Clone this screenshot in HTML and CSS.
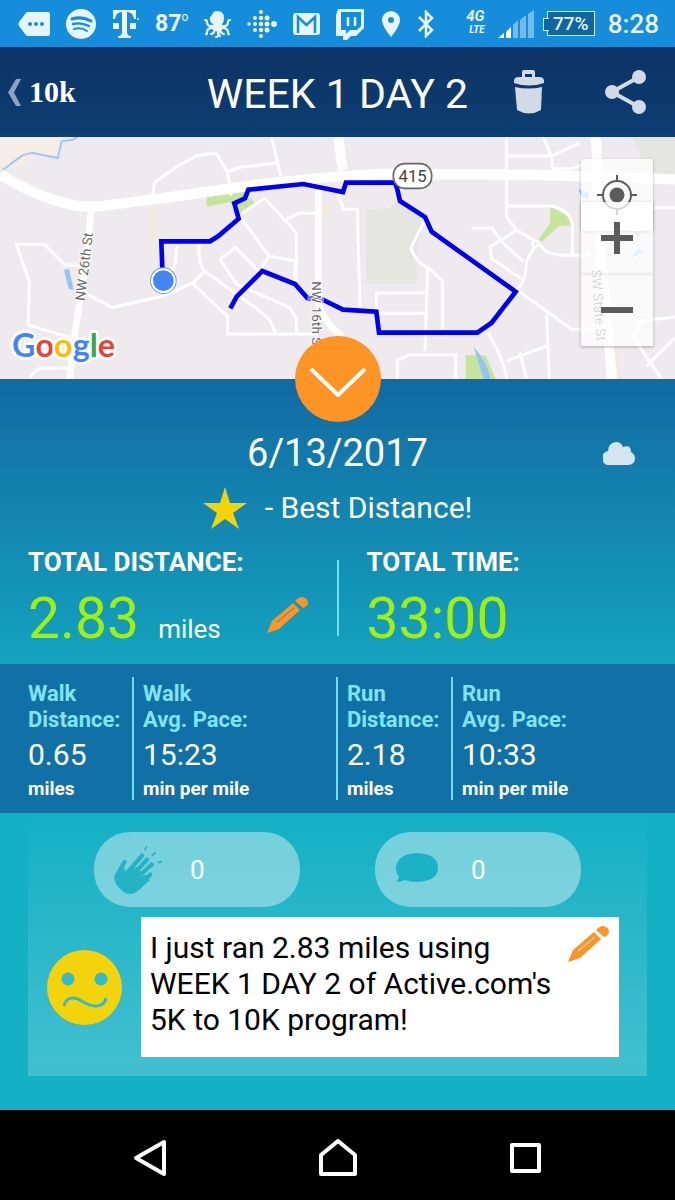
FILE: index.html
```html
<!DOCTYPE html>
<html lang="en">
<head>
<meta charset="UTF-8">
<meta name="viewport" content="width=device-width, initial-scale=1.0">
<title>WEEK 1 DAY 2</title>
<link rel="stylesheet" href="styles.css">
</head>
<body>
    <!-- phone status bar -->
    <div class="status">
        <div class="status-left">
            <svg width="32" height="26" viewBox="0 0 32 26"><path d="M10 1h20q2 0 2 2v20q0 2-2 2H10q-2 0-3-2L1 15q-1-2 0-4l6-8q1-2 3-2z" fill="#e8f4fc"/><g fill="#158ddb"><circle cx="12" cy="13" r="2"/><circle cx="18" cy="13" r="2"/><circle cx="24" cy="13" r="2"/></g></svg>
            <svg width="30" height="30" viewBox="0 0 30 30"><circle cx="15" cy="15" r="15" fill="#e8f4fc"/><g fill="none" stroke="#158ddb" stroke-linecap="round"><path d="M6 10q10-3 19 2" stroke-width="3"/><path d="M7 15q8-2 16 2" stroke-width="2.4"/><path d="M8 20q7-2 13 2" stroke-width="2"/></g></svg>
            <svg width="27" height="30" viewBox="0 0 27 30"><path d="M1 1h23v9h-2q-1-7-7-7v20q0 4 4 4v2H6v-2q4 0 4-4V3q-6 0-7 7H1zM1 14h6v6H1zM18 14h6v6h-6z" fill="#e8f4fc"/><circle cx="26" cy="10" r="1" fill="#e8f4fc"/></svg>
            <span class="temp">87<sup>o</sup></span>
            <svg width="27" height="30" viewBox="0 0 27 30"><g fill="none" stroke="#e8f4fc" stroke-width="2.2" stroke-linecap="round"><path d="M9 17q-6 1-6-4 0-2-2-2M18 17q6 1 6-4 0-2 2-2M9 19q-6 0-6 4 0 3-1 2M18 19q6 0 6 4 0 3 1 2M11 20q-1 5-4 5M16 20q1 5 4 5M13 20q3 8-1 8M15 20q-1 6 1 7"/></g><path d="M13 2q7 0 7 7 0 4-2 6 1 4 0 6-4 2-9 0-1-2 0-6-4-2-3-7l2-2q1-4 5-4z" fill="#e8f4fc"/></svg>
            <svg width="30" height="30" viewBox="0 0 30 30" fill="#e8f4fc"><circle cx="2" cy="15" r="1.7"/><circle cx="8" cy="9" r="2"/><circle cx="8" cy="15" r="2"/><circle cx="8" cy="21" r="2"/><circle cx="14" cy="3" r="2"/><circle cx="14" cy="9" r="2.2"/><circle cx="14" cy="15" r="2.2"/><circle cx="14" cy="21" r="2.2"/><circle cx="14" cy="27" r="2"/><circle cx="20" cy="9" r="2.5"/><circle cx="20" cy="15" r="2.5"/><circle cx="20" cy="21" r="2.5"/><circle cx="27" cy="15" r="2.9"/></svg>
            <svg width="27" height="22" viewBox="0 0 27 22"><rect width="27" height="22" rx="3" fill="#e8f4fc"/><path d="M5 20V4l8.500 8L22 4v16" fill="none" stroke="#158ddb" stroke-width="2.500"/></svg>
            <svg width="29" height="32" viewBox="0 0 29 32"><path d="M2 1h26v19l-8 8h-5l-4 4H7v-4H0V7zM5 4v18h5v4l4-4h7l4-4V4z" fill="#e8f4fc" fill-rule="evenodd"/><path d="M12 9v9M19 9v9" stroke="#e8f4fc" stroke-width="2.500"/></svg>
            <svg width="20" height="28" viewBox="0 0 20 28"><path d="M10 1a9 9 0 0 1 9 9q0 6-9 17Q1 16 1 10a9 9 0 0 1 9-9zm0 6a3 3 0 1 0 0 6 3 3 0 0 0 0-6z" fill="#e8f4fc"/></svg>
            <svg width="18" height="28" viewBox="0 0 18 28"><path d="M2 7l13 13-6 6V2l6 6L2 21" fill="none" stroke="#e8f4fc" stroke-width="2.500"/></svg>
        </div>
        <div class="status-right">
            <span class="network"><b>4G</b><b class="lte">LTE</b></span>
            <svg width="36" height="28" viewBox="0 0 36 28"><path d="M0 28l6-5v5zM8 28v-6l5-5v11z" fill="#fff"/><path d="M15 28V15l5-5v18zM22 28V10l6-5v23zM30 28V4l6-4v28z" fill="#73bcea"/></svg>
            <span class="battery">77%</span>
            <span class="clock">8:28</span>
        </div>
    </div>

    <header class="header">
        <a class="back" href="#">
            <svg width="13" height="27" viewBox="0 0 13 27"><path d="M8 0h5L6 13.500 13 27H8L0 13.500z" fill="#8ba2c0"/></svg>
            <span>10k</span>
        </a>
        <h1>WEEK 1 DAY 2</h1>
        <div class="actions">
            <button type="button" aria-label="Delete">
                <svg width="30" height="45" viewBox="0 0 30 45"><g fill="#d2dae5"><path d="M8 9V2q0-2 2-2h9q2 0 2 2v7h-3V4h-7v5z"/><path d="M0 13V11q0-4 5-4h20q5 0 5 4v2q-15 5-30 0z"/><path d="M1 17q14 3 27 0l-1 23q-12 7-24 0z"/></g></svg>
            </button>
            <button type="button" aria-label="Share">
                <svg width="42" height="44" viewBox="0 0 42 44"><path d="M34 7L7 22l27 15" fill="none" stroke="#d2dae5" stroke-width="4"/><g fill="#d2dae5"><circle cx="34" cy="7" r="7"/><circle cx="7" cy="22" r="7"/><circle cx="34" cy="37" r="7"/></g></svg>
            </button>
        </div>
    </header>

    <section class="map">
        <svg class="map-art" viewBox="0 3 2025 726" preserveAspectRatio="xMidYMid slice">
            <rect y="3" width="2025" height="726" fill="#eeeaee"/>
            <!-- parks and water -->
            <path d="M0 3h185l-12 62-77-15-30 42H0z" fill="#f6ede6"/>
            <path d="M1098 222l70-5 35-30 75 60-28 85v110h-152z" fill="#e5e6df"/>
            <path d="M1895 3h130v122l-90-20-20-60z" fill="#e5e6df"/>
            <path d="M620 182l115-17 32 38-42 30-35-35-70 14zM1652 212l62 35v22l-38 2-50 45-10-8 34-45zM1397 658h60l30 71h-90z" fill="#c4e59b"/>
            <path d="M192 402l15-4 14 64-15-4zM1421 633q45 50 50 96h-20zM1735 160l30 10v20l-20-8zM1895 365l20-28 15 10zM1903 285l15 3-4 18z" fill="#97c3f4"/>
            <path d="M8 102l58-43 30-9 77 16 12-50 35-5 12-9" fill="none" stroke="#9fc6f5" stroke-width="6"/>
            <path d="M460 215v100M975 210v30M1845 640l10 89" stroke="#f7e9da" stroke-width="14"/>
            <!-- side streets -->
            <g fill="none" stroke="#fff" stroke-width="9">
                <path d="M455 200l8-60q50-40 125-80l60-10 35 60 10 70M680 108l45-15 108-12M815 3l18 78 10 40"/>
                <path d="M45 325h88l62 62h60M50 327l38 110-3 130 125 38M245 465l90 50 155-35 90-40 35-35M90 729l5-13 25-20h90M532 330l-8 60-14 20"/>
                <path d="M598 325q-5 60 15 80l160 115 35 30 20 42M575 440l108 102v52h270M715 235l92 125 80 15-5 60M725 232l70-45 95 105v150M807 360l-22 35M660 370l46-36 90 92M660 370l50 75 160 70 20 35v45M860 250l35-18h55"/>
                <path d="M1015 175l15 45h42l8 300M1278 245l-45 90q10 40 50 60l45 40v145M1283 395l-8 250M1130 525v-53l145-2M1130 532h145M1192 729v-55l35-18h140v73"/>
                <path d="M1520 3v240l30 40 60 35 30 30 40 10h90M1520 60h135l85-40M1630 3l25 60 5 55M1660 98h60l40-20M1520 210h132q60 10 65 60v85M1415 277h60l35 45 60 55M1550 283l-80 50 5 35 90 60M1605 330l-25 45q-5 80-35 85M1555 465l160 115h80M1465 590q50 90 55 139M1640 535l8 194M1520 675l120-45M1560 650l20 79M1790 215h235M1900 602l25-47 100-12M1900 602l45 70 40 57M1940 690l85-85"/>
            </g>
            <circle cx="1606" cy="323" r="9" fill="#eeeaee" stroke="#fff" stroke-width="7"/>
            <!-- main roads -->
            <g fill="none" stroke="#fff">
                <path d="M0 115q120 75 240 96h60l205-27 285-40 215-22 140-8 450 2 670 22" stroke-width="31"/>
                <path d="M275 215l-20 180-32 210-14 124M955 150v330q-5 60 70 120" stroke-width="20"/>
                <path d="M1015 3l13 100M1785 3q10 40 6 150l15 240 30 336" stroke-width="30"/>
            </g>
            <path d="M487 400l-3-84h146l25-16 61-52-13-46 32-15 10-26 165-17 119 24 9-28h147l7 20 8 35 75 48 20 44 252 180-72 93-43 30h-295l-8-63-100-6-59-29-48-6-37-42-98-39-77 77-19 35" fill="none" stroke="#00e" stroke-width="14"/>
            <path d="M922 486l50 6" stroke="#7775e8" stroke-width="14"/>
            <circle cx="490" cy="434" r="40" fill="#7a9cbc"/>
            <circle cx="490" cy="434" r="37" fill="#fff"/>
            <circle cx="490" cy="434" r="31" fill="#4387f2"/>
            <g class="street">
                <text transform="translate(254 496) rotate(-83)">NW 26th St</text>
                <text transform="translate(935 436) rotate(90)">NW 16th St</text>
                <text transform="translate(1774 402) rotate(86)">SW State St</text>
            </g>
            <rect x="1180" y="83" width="115" height="74" rx="34" fill="#fff" stroke="#666" stroke-width="5"/>
            <text class="route-no" x="1238" y="138">415</text>
            <text class="google" x="36" y="664"><tspan fill="#4285f4">G</tspan><tspan fill="#ea4335">o</tspan><tspan fill="#fbbc05">o</tspan><tspan fill="#4285f4">g</tspan><tspan fill="#34a853">l</tspan><tspan fill="#ea4335">e</tspan></text>
        </svg>
        <div class="map-controls">
            <button class="locate" type="button" aria-label="My location">
                <svg width="40" height="40" viewBox="0 0 40 40"><g fill="none" stroke="#5c5c5c" stroke-width="2"><circle cx="20" cy="20" r="14"/><path d="M20 0v7M20 33v7M0 20h7M33 20h7"/></g><circle cx="20" cy="20" r="7.500" fill="#5c5c5c"/></svg>
            </button>
            <button class="zoom-in" type="button" aria-label="Zoom in">
                <svg width="32" height="32" viewBox="0 0 32 32"><path d="M16 0v32M0 16h32" stroke="#5c5c5c" stroke-width="6"/></svg>
            </button>
            <button class="zoom-out" type="button" aria-label="Zoom out">
                <svg width="32" height="32" viewBox="0 0 32 32"><path d="M0 16h32" stroke="#5c5c5c" stroke-width="6"/></svg>
            </button>
        </div>
        <button class="toggle" type="button" aria-label="Expand map">
            <svg width="58" height="30" viewBox="0 0 58 30"><path d="M2 2l27 26L56 2" fill="none" stroke="#fff" stroke-width="4"/></svg>
        </button>
    </section>

    <section class="summary">
        <div class="date-row">
            <h2>6/13/2017</h2>
            <svg class="cloud" width="32" height="23" viewBox="0 0 32 23"><path d="M7 23a7 7 0 0 1-2-14Q5 1 13 0q5 0 7 5 8-3 8 5 4 2 4 6 0 7-7 7z" fill="#d3e5f1"/></svg>
        </div>
        <p class="best">
            <svg width="44" height="42" viewBox="0 0 44 42"><path d="M22 0l5 16h17L30 26l6 16-14-10L8 42l6-16L0 16h17z" fill="#f3d30b"/></svg>
            - Best Distance!
        </p>
        <div class="totals">
            <div class="total">
                <h3>TOTAL DISTANCE:</h3>
                <p><span class="number">2.83</span><span class="unit">miles</span>
                    <button type="button" aria-label="Edit distance">
                        <svg width="42" height="37" viewBox="0 0 42 37"><g fill="#fd9426"><path d="M0 36l5-12L26 6l7 7-21 19z"/><path d="M28 4q4-4 7-4 6 1 6 6-1 4-5 5z"/></g><path d="M10 25L27 11" stroke="#1593b7" stroke-width="1"/></svg>
                    </button>
                </p>
            </div>
            <div class="total">
                <h3>TOTAL TIME:</h3>
                <p><span class="number">33:00</span></p>
            </div>
        </div>
    </section>

    <dl class="stats">
        <div><dt>Walk<br>Distance:</dt><dd>0.65</dd><dd class="small">miles</dd></div>
        <div><dt>Walk<br>Avg. Pace:</dt><dd>15:23</dd><dd class="small">min per mile</dd></div>
        <div><dt>Run<br>Distance:</dt><dd>2.18</dd><dd class="small">miles</dd></div>
        <div><dt>Run<br>Avg. Pace:</dt><dd>10:33</dd><dd class="small">min per mile</dd></div>
    </dl>

    <main class="feed">
        <div class="card">
            <div class="pills">
                <button class="pill" type="button" aria-label="Claps">
                    <svg width="48" height="48" viewBox="342 73 144 144"><path d="M343 163l27-38 5 25 30-20 45 45-30 27q-25 25-50 8-30-22-27-47z" fill="#24b3c5"/><g fill="none" stroke="#24b3c5" stroke-width="13" stroke-linecap="round"><path d="M351 160l23-39M380 155l46-53M395 165l46-51M408 172l47-43M420 185l31-26"/></g><g stroke="#7ad2de" stroke-width="2"><path d="M403 143l30-36M414 153l33-33M424 165l30-26"/></g><g stroke="#24b3c5" stroke-width="5" stroke-linecap="round"><path d="M435 84l4-7M457 101l8-7M475 122l9-2"/></g></svg>
                    <span>0</span>
                </button>
                <button class="pill" type="button" aria-label="Comments">
                    <svg width="48" height="38" viewBox="0 0 48 38"><path d="M22 2q21 1 21 15 0 13-21 14-7 0-12-2-4 2-9 2 3-3 3-5-3-4-3-9Q2 3 22 2z" fill="#1cb1c4"/></svg>
                    <span>0</span>
                </button>
            </div>
            <div class="post">
                <svg class="face" width="75" height="75" viewBox="0 0 75 75"><circle cx="37.500" cy="37.500" r="37.500" fill="#f3d30b"/><circle cx="21" cy="29" r="6.500" fill="#35bac9"/><circle cx="54" cy="29" r="6.500" fill="#35bac9"/><path d="M17 56q3-11 14-7 13 8 19 7 8-1 9-8" fill="none" stroke="#35bac9" stroke-width="3"/></svg>
                <div class="message">
                    <p>I just ran 2.83 miles using WEEK 1 DAY 2 of Active.com's 5K to 10K program!</p>
                    <button type="button" aria-label="Edit message">
                        <svg width="42" height="37" viewBox="0 0 42 37"><g fill="#fd9426"><path d="M0 36l5-12L26 6l7 7-21 19z"/><path d="M28 4q4-4 7-4 6 1 6 6-1 4-5 5z"/></g><path d="M10 25L27 11" stroke="#fff" stroke-width="1"/></svg>
                    </button>
                </div>
            </div>
        </div>
    </main>

    <nav class="nav">
        <button type="button" aria-label="Back"><svg width="38" height="38" viewBox="0 0 38 38"><path d="M5 19L33 3v32z"/></svg></button>
        <button type="button" aria-label="Home"><svg width="38" height="38" viewBox="0 0 38 38"><path d="M2 16L19 2l17 14v19H2z"/></svg></button>
        <button type="button" aria-label="Recent apps"><svg width="38" height="38" viewBox="0 0 38 38"><path d="M6 6h27v26H6z"/></svg></button>
    </nav>
</body>
</html>
```
FILE: styles.css
```css
* {
    box-sizing: border-box;
}
body {
    margin: 0;
    min-height: 100vh;
    display: flex;
    flex-direction: column;
    background-color: #14b0c4;
    color: white;
    font-family: Roboto, "Liberation Sans", sans-serif;
}
h1, h2, h3, p, dl, dd {
    margin: 0;
    font-weight: 400;
}
button {
    padding: 0;
    border: 0;
    background: none;
    color: inherit;
    font-family: inherit;
    cursor: pointer;
}
svg {
    display: block;
    flex: none;
}

/* status bar */
.status {
    display: flex;
    justify-content: space-between;
    align-items: center;
    height: 47px;
    padding: 0 16px 0 18px;
    background-color: #158ddb;
    color: #e8f4fc;
}
.status-left, .status-right {
    display: flex;
    align-items: center;
    gap: 16px;
}
.status-right {
    gap: 13px;
}
.temp {
    display: flex;
    font-size: 23px;
    font-weight: 700;
}
.temp sup {
    font-size: 12px;
    font-weight: 400;
    line-height: 14px;
}
.network {
    display: flex;
    flex-direction: column;
    align-self: flex-start;
    font-size: 15px;
    line-height: 15px;
    font-style: italic;
}
.network .lte {
    font-size: 10px;
    line-height: 12px;
    padding-left: 3px;
}
.battery {
    position: relative;
    width: 48px;
    height: 25px;
    border: 1px solid #d0e9f8;
    background-color: #11669f;
    font-size: 19px;
    font-weight: 500;
    line-height: 24px;
    text-align: center;
}
.battery::before {
    content: "";
    position: absolute;
    left: -5px;
    top: 6px;
    width: 5px;
    height: 11px;
    border: 1px solid #d0e9f8;
    border-right: 0;
    background-color: #11669f;
}
.clock {
    font-size: 26px;
    font-weight: 500;
}

/* title bar */
.header {
    display: grid;
    grid-template-columns: 1fr auto 1fr;
    align-items: center;
    height: 90px;
    padding: 0 28px 0 8px;
    background: linear-gradient(#0c3364, #0d3e74);
}
.back {
    display: flex;
    align-items: center;
    gap: 8px;
    color: white;
    text-decoration: none;
    font-family: "Liberation Serif", serif;
    font-size: 30px;
    font-weight: 700;
}
.header h1 {
    font-size: 41px;
    line-height: 48px;
    padding: 3px 0 0 20px;
}
.actions {
    display: flex;
    justify-content: flex-end;
    gap: 61px;
}

/* map */
.map {
    position: relative;
    height: 242px;
}
.map-art {
    width: 100%;
    height: 100%;
}
.street {
    font-size: 41px;
    fill: #686868;
    stroke: #fff;
    stroke-width: 6px;
    paint-order: stroke;
}
.route-no {
    font-size: 50px;
    text-anchor: middle;
    fill: #444;
}
.google {
    font-family: Lato, sans-serif;
    font-size: 97px;
    font-weight: 700;
    stroke: #fff;
    stroke-width: 16px;
    stroke-linejoin: round;
    paint-order: stroke;
}
.map-controls {
    position: absolute;
    top: 22px;
    right: 22px;
    display: flex;
    flex-direction: column;
    width: 72px;
}
.map-controls button {
    display: flex;
    justify-content: center;
    align-items: center;
    height: 72px;
    background-color: rgba(255, 255, 255, 0.75);
    box-shadow: 0 1px 3px rgba(0, 0, 0, 0.3);
}
.map-controls .locate {
    border-radius: 2px;
}
.map-controls .zoom-in {
    margin-top: -29px;
}
.toggle {
    position: absolute;
    left: 50%;
    bottom: -43px;
    z-index: 1;
    display: flex;
    justify-content: center;
    align-items: center;
    width: 86px;
    height: 86px;
    margin-left: -43px;
    padding-top: 6px;
    border-radius: 50%;
    background-color: #fd9426;
}

/* totals */
.summary {
    padding: 50px 28px 27px;
    background: linear-gradient(#126aa3, #14a3be);
}
.date-row {
    display: grid;
    grid-template-columns: 1fr auto 1fr;
    align-items: center;
    height: 48px;
    padding-right: 12px;
}
.date-row h2 {
    grid-column: 2;
    padding-left: 12px;
    font-size: 38px;
}
.cloud {
    justify-self: end;
}
.best {
    display: flex;
    justify-content: center;
    align-items: center;
    gap: 18px;
    margin-top: 9px;
    font-size: 30px;
    line-height: 44px;
}
.totals {
    display: grid;
    grid-template-columns: 1fr 1fr;
    margin-top: 17px;
}
.total {
    position: relative;
}
.total + .total {
    padding-left: 29px;
}
.total + .total::before {
    content: "";
    position: absolute;
    left: -1px;
    top: 13px;
    bottom: 1px;
    width: 2px;
    background-color: #70dff0;
}
.total h3 {
    font-size: 26px;
    font-weight: 700;
    line-height: 30px;
}
.total p {
    display: flex;
    align-items: baseline;
    line-height: 60px;
    height: 60px;
    padding-top: 12px;
}
.number {
    color: #a0ef11;
    font-size: 57px;
}
.unit {
    margin-left: 19px;
    font-size: 26px;
}
.total button {
    align-self: flex-start;
    margin: 8px 29px 0 auto;
}

/* walk and run stats */
.stats {
    display: grid;
    grid-template-columns: 115fr 204fr 115fr 224fr;
    padding: 13px 0 13px 17px;
    background-color: #1170a6;
}
.stats div {
    padding: 4px 0 0 9px;
    border-left: 2px solid #70dff0;
}
.stats div:first-child {
    border-color: transparent;
}
.stats dt {
    color: #82e4f3;
    font-size: 22px;
    font-weight: 700;
    line-height: 26px;
}
.stats dd {
    font-size: 30px;
    line-height: 44px;
}
.stats .small {
    font-size: 19px;
    font-weight: 700;
    line-height: 23px;
}

/* feed card */
.feed {
    flex: 1;
    padding: 0 28px 34px;
}
.card {
    padding: 19px 28px 19px 19px;
    background: linear-gradient(rgba(255, 255, 255, 0), rgba(255, 255, 255, 0.2));
}
.pills {
    display: flex;
    justify-content: center;
    gap: 75px;
    padding-left: 9px;
}
.pill {
    display: flex;
    align-items: center;
    gap: 28px;
    width: 206px;
    height: 75px;
    padding-left: 20px;
    border-radius: 36px;
    background-color: rgba(255, 255, 255, 0.4);
    font-size: 26px;
}
.post {
    display: flex;
    align-items: center;
    gap: 19px;
    margin-top: 10px;
}
.message {
    flex: 1;
    display: flex;
    align-items: flex-start;
    min-height: 140px;
    padding: 9px;
    background-color: white;
    color: black;
}
.message p {
    flex: 1;
    padding-top: 4px;
    font-size: 30px;
    line-height: 36px;
}

/* system buttons */
.nav {
    display: flex;
    height: 90px;
    padding: 6px 56px 0;
    background-color: black;
}
.nav button {
    flex: 1;
    display: flex;
    justify-content: center;
    align-items: center;
}
.nav path {
    fill: none;
    stroke: white;
    stroke-width: 4;
    stroke-linejoin: round;
}
```
